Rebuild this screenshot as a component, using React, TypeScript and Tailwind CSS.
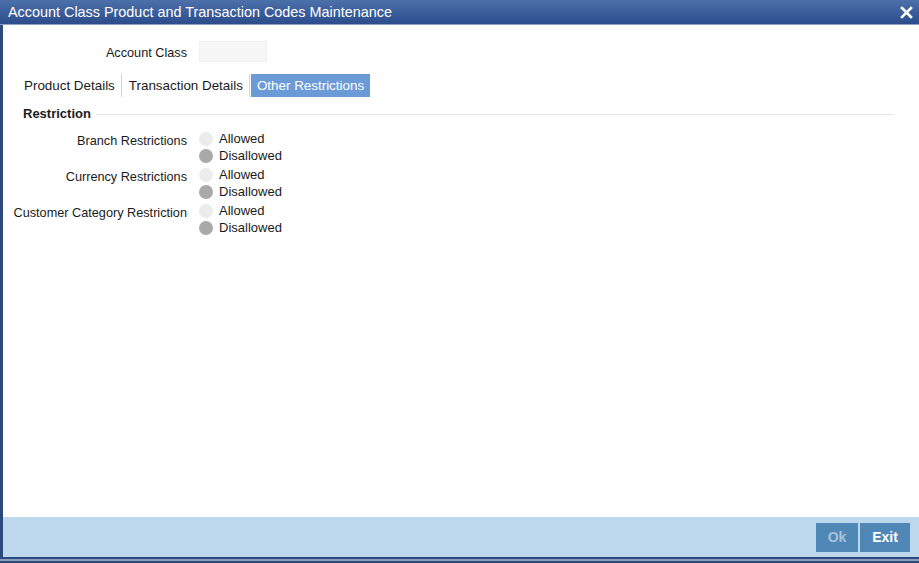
import { useState } from 'react';

interface RestrictionRow {
    label: string;
    value: 'allowed' | 'disallowed';
}

const initialRows: RestrictionRow[] = [
    { label: 'Branch Restrictions', value: 'disallowed' },
    { label: 'Currency Restrictions', value: 'disallowed' },
    { label: 'Customer Category Restriction', value: 'disallowed' },
];

const tabs = ['Product Details', 'Transaction Details', 'Other Restrictions'];

function Radio({ checked, label, onClick }: { checked: boolean; label: string; onClick: () => void }) {
    return (
        <button onClick={onClick} className="flex items-center h-[17px] text-left">
            <span className={`w-[14px] h-[14px] rounded-full ${checked ? 'bg-[#a9a9a9]' : 'bg-[#ececec]'}`} />
            <span className="ml-[6px] text-[13px] text-[#1a1a1a]">{label}</span>
        </button>
    );
}

export default function App() {
    const [rows, setRows] = useState(initialRows);
    const [activeTab, setActiveTab] = useState(2);

    const setValue = (idx: number, value: RestrictionRow['value']) => {
        setRows(prev => prev.map((r, i) => (i === idx ? { ...r, value } : r)));
    };

    return (
        <div className="w-[919px] h-[563px] flex flex-col bg-white font-['Liberation_Sans',Arial,sans-serif] overflow-hidden">
            {/* title bar */}
            <div className="h-[24px] flex items-center justify-between pl-[8px] pr-[6px] bg-gradient-to-b from-[#4c70aa] to-[#2c4c8c] border-b border-[#8aa2c4] box-content">
                <span className="text-white text-[14.4px] leading-none">Account Class Product and Transaction Codes Maintenance</span>
                <svg width="13" height="13" viewBox="0 0 13 13" className="mt-[1px]">
                    <path d="M2 2 L11 11 M11 2 L2 11" stroke="white" strokeWidth="2.6" strokeLinecap="square" />
                </svg>
            </div>

            <div className="flex-1 flex border-l-[3px] border-[#2d4a7d]">
                <div className="flex-1 flex flex-col">
                    {/* content */}
                    <div className="flex-1 pt-[16px]">
                        <div className="flex items-center">
                            <div className="w-[184px] pt-[3px] leading-[17px] text-right text-[12.7px] text-[#1a1a1a]">Account Class</div>
                            <div className="ml-[12px] w-[68px] h-[21px] bg-[#f7f7f7] border border-[#f0f0f0]" />
                        </div>

                        <div className="flex items-stretch h-[23px] mt-[12px] ml-[15px]">
                            {tabs.map((t, i) => (
                                <div key={t} className="flex items-stretch">
                                    {i > 0 && <div className="w-px bg-[#d4d4d4] mr-[1px]" />}
                                    <button
                                        onClick={() => setActiveTab(i)}
                                        className={`px-[6px] pt-[2px] text-[13.4px] ${activeTab === i ? 'bg-[#6b9bd6] text-white' : 'text-[#1a1a1a]'}`}
                                    >
                                        {t}
                                    </button>
                                </div>
                            ))}
                        </div>

                        <div className="flex items-center mt-[8px] ml-[20px] mr-[25px] h-[18px]">
                            <span className="text-[13px] font-bold text-[#1a1a1a]">Restriction</span>
                            <div className="flex-1 h-px bg-[#e6e6e6] ml-[5px]" />
                        </div>

                        <div className="mt-[7px] flex flex-col gap-[2px]">
                            {rows.map((r, i) => (
                                <div key={r.label} className="flex">
                                    <div className="w-[184px] pt-[3px] text-right text-[12.7px] text-[#1a1a1a] leading-[17px]">{r.label}</div>
                                    <div className="ml-[12px] flex flex-col">
                                        <Radio checked={r.value === 'allowed'} label="Allowed" onClick={() => setValue(i, 'allowed')} />
                                        <Radio checked={r.value === 'disallowed'} label="Disallowed" onClick={() => setValue(i, 'disallowed')} />
                                    </div>
                                </div>
                            ))}
                        </div>
                    </div>

                    {/* footer */}
                    <div className="h-[40px] bg-[#bdd8ec] flex items-center justify-end pr-[9px] gap-[2px]">
                        <button className="w-[42px] h-[29px] bg-[#4f88b7] text-[#a8c2d8] text-[14px] font-bold">Ok</button>
                        <button className="w-[50px] h-[29px] bg-[#4f88b7] text-white text-[14px] font-bold">Exit</button>
                    </div>
                </div>
            </div>

            <div className="h-[2px] bg-[#2d4a7d]" />
            <div className="h-[2px] bg-[#8a9fbd]" />
            <div className="h-[2px] bg-[#2d4a7d]" />
        </div>
    );
}
